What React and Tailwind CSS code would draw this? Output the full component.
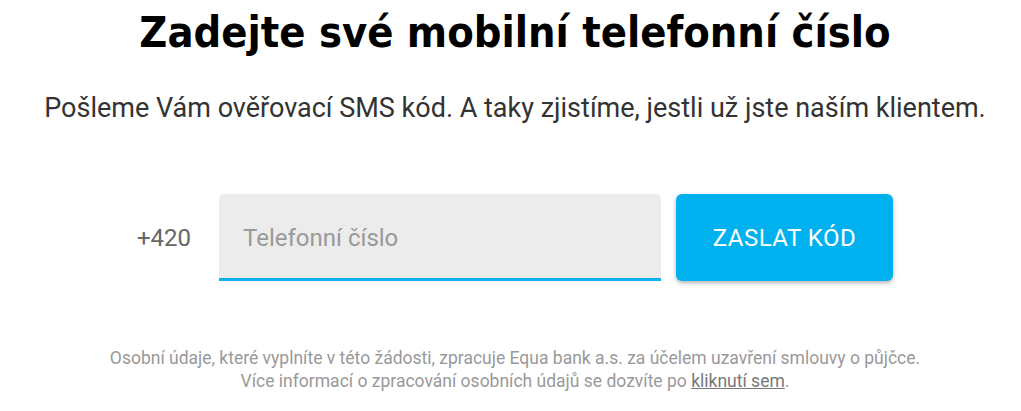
import React from "react";

function App() {
  return (
    <div className="min-h-screen bg-white font-['Roboto',sans-serif]">
      <div className="flex flex-col items-center pl-[9px] pt-[2px]">
        <h1 className="font-['DejaVu_Sans_Condensed','DejaVu_Sans',sans-serif] text-[43px] font-bold leading-[60px] text-black">
          Zadejte své mobilní telefonní číslo
        </h1>
        <p className="mt-[30px] text-[27px] leading-[32px] text-[#333]">
          Pošleme Vám ověřovací SMS kód. A taky zjistíme, jestli už jste naším klientem.
        </p>

        <div className="mt-[70px] flex items-center">
          <span className="w-[82px] text-[24px] text-[#666]">+420</span>
          <div className="flex h-[87px] w-[442px] items-center rounded-t-[5px] border-b-[3px] border-[#0cb1ee] bg-[#ececec] pl-[24px] pt-[3px]">
            <input
              type="text"
              placeholder="Telefonní číslo"
              className="w-full bg-transparent text-[24px] text-[#333] outline-none placeholder:text-[#999]"
            />
          </div>
          <button className="ml-[15px] h-[87px] w-[217px] rounded-[6px] bg-[#00b1f0] text-[24px] tracking-[0.5px] text-white shadow-[0_2px_4px_rgba(0,0,0,0.3)]">
            ZASLAT KÓD
          </button>
        </div>

        <div className="mt-[66px] text-center text-[17.5px] leading-[23px] text-[#999]">
          <p>
            Osobní údaje, které vyplníte v této žádosti, zpracuje Equa bank a.s. za účelem uzavření smlouvy o půjčce.
          </p>
          <p>
            Více informací o zpracování osobních údajů se dozvíte po{" "}
            <a href="#" className="text-[#777] underline">
              kliknutí sem
            </a>
            .
          </p>
        </div>
      </div>
    </div>
  );
}

export default App;
